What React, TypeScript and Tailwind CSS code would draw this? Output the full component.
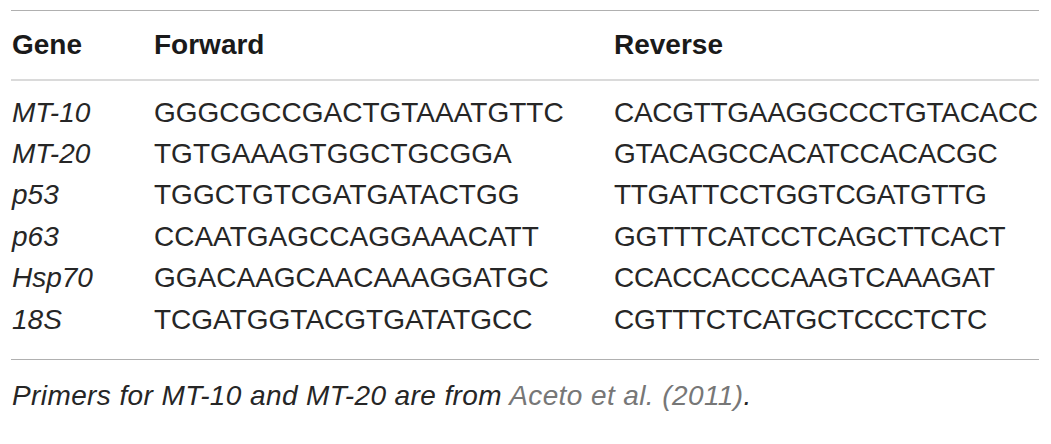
import React from 'react';

const rows = [
  { gene: 'MT-10', fwd: 'GGGCGCCGACTGTAAATGTTC', rev: 'CACGTTGAAGGCCCTGTACACC' },
  { gene: 'MT-20', fwd: 'TGTGAAAGTGGCTGCGGA', rev: 'GTACAGCCACATCCACACGC' },
  { gene: 'p53', fwd: 'TGGCTGTCGATGATACTGG', rev: 'TTGATTCCTGGTCGATGTTG' },
  { gene: 'p63', fwd: 'CCAATGAGCCAGGAAACATT', rev: 'GGTTTCATCCTCAGCTTCACT' },
  { gene: 'Hsp70', fwd: 'GGACAAGCAACAAAGGATGC', rev: 'CCACCACCCAAGTCAAAGAT' },
  { gene: '18S', fwd: 'TCGATGGTACGTGATATGCC', rev: 'CGTTTCTCATGCTCCCTCTC' },
];

export default function App() {
  return (
    <div className="w-[1051px] h-[444px] bg-white font-['Liberation_Sans',Arial,sans-serif] text-[#262626]">
      <div className="pt-[10px] pl-[11px] w-[1039px]">
        <div className="border-t border-[#b0b0b0]" />

        <div className="grid grid-cols-[142px_460px_1fr] h-[70px] items-center pl-[1px] text-[28px] font-bold text-[#1a1a1a] border-b-2 border-[#dadada]">
          <span>Gene</span>
          <span>Forward</span>
          <span>Reverse</span>
        </div>

        <div className="pt-[11px] pb-[19px]">
          {rows.map((r) => (
            <div
              key={r.gene}
              className="grid grid-cols-[142px_460px_1fr] h-[41.4px] items-center pl-[1px] text-[28px] leading-none"
            >
              <span className="italic">{r.gene}</span>
              <span>{r.fwd}</span>
              <span className="whitespace-nowrap tracking-[-0.3px]">{r.rev}</span>
            </div>
          ))}
        </div>

        <div className="border-t border-[#b0b0b0]" />

        <p className="pt-[22px] pl-[1px] text-[28px] leading-none italic tracking-[0.4px]">
          Primers for MT-10 and MT-20 are from{' '}
          <span className="text-[#777777]">Aceto et al. (2011)</span>.
        </p>
      </div>
    </div>
  );
}
